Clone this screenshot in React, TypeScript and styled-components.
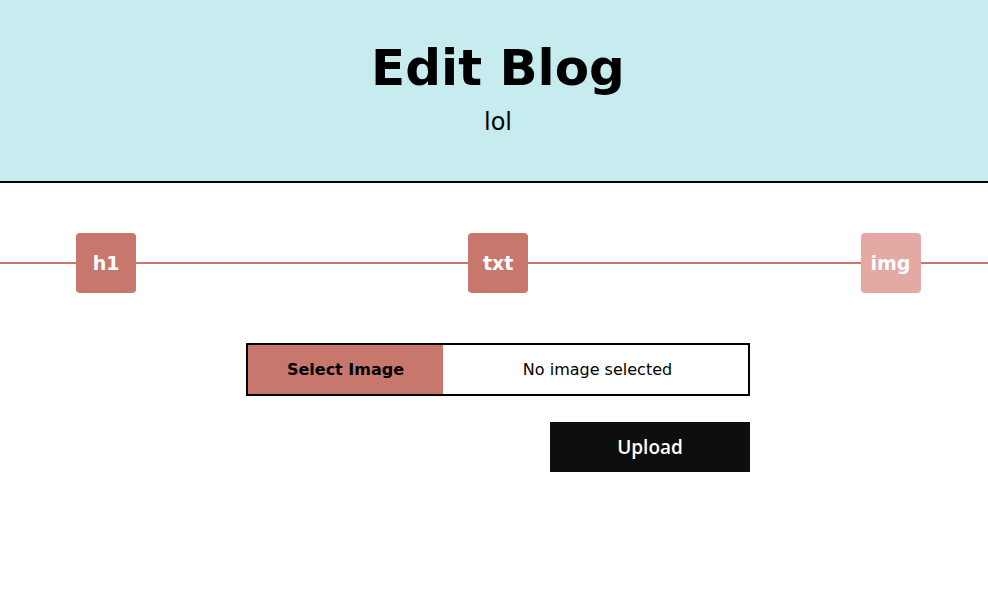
import styled, { createGlobalStyle } from 'styled-components';

const GlobalStyle = createGlobalStyle`
	body {
		margin: 0;
		background: #ffffff;
		font-family: 'DejaVu Sans', sans-serif;
	}
`;

const Header = styled.header`
	height: 142px;
	padding: 39px 0 0 8px;
	background: #c6ecf0;
	border-bottom: 2px solid #000000;
	text-align: center;
`;

const Title = styled.h1`
	margin: 0;
	font-size: 50px;
	font-weight: bold;
	color: #000000;
`;

const Subtitle = styled.p`
	margin: 11px 0 0;
	font-size: 24px;
	color: #000000;
`;

const Timeline = styled.nav`
	margin-top: 50px;
	height: 60px;
	padding: 0 67.5px 0 76px;
	display: flex;
	justify-content: space-between;
	align-items: center;
	background: linear-gradient(#c8776d, #c8776d) center / 100% 2px no-repeat;
`;

const Step = styled.div<{ $faded?: boolean }>`
	width: 60px;
	height: 60px;
	border-radius: 4px;
	display: flex;
	align-items: center;
	justify-content: center;
	background: ${(p) => (p.$faded ? '#e5a9a3' : '#c8776d')};
	color: #ffffff;
	font-size: 19px;
	font-weight: bold;
`;

const Form = styled.form`
	width: 504px;
	margin: 50px 0 0 calc(50% - 248px);
	display: flex;
	flex-direction: column;
	align-items: flex-end;
	gap: 26px;
`;

const FilePicker = styled.label`
	width: 100%;
	height: 53px;
	box-sizing: border-box;
	border: 2px solid #000000;
	display: flex;
	font-size: 16px;
`;

const PickButton = styled.span`
	width: 195px;
	background: #c8776d;
	display: flex;
	align-items: center;
	justify-content: center;
	font-weight: bold;
	color: #000000;
`;

const FileName = styled.span`
	flex: 1;
	padding-left: 4px;
	display: flex;
	align-items: center;
	justify-content: center;
	color: #000000;
`;

const UploadButton = styled.button`
	width: 200px;
	height: 50px;
	border: none;
	background: #0e0e0e;
	color: #ffffff;
	font-family: 'Open Sans', sans-serif;
	font-size: 19px;
	font-weight: 600;
	cursor: pointer;
`;

export default function App() {
	return (
		<>
			<GlobalStyle />
			<Header>
				<Title>Edit Blog</Title>
				<Subtitle>lol</Subtitle>
			</Header>
			<Timeline>
				<Step>h1</Step>
				<Step>txt</Step>
				<Step $faded>img</Step>
			</Timeline>
			<Form onSubmit={(e) => e.preventDefault()}>
				<FilePicker>
					<PickButton>Select Image</PickButton>
					<FileName>No image selected</FileName>
				</FilePicker>
				<UploadButton type="submit">Upload</UploadButton>
			</Form>
		</>
	);
}
